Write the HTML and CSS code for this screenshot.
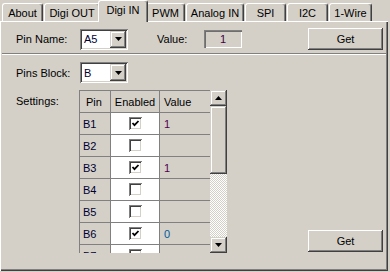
FILE: index.html
```html
<!DOCTYPE html>
<html lang="en">
<head>
  <meta charset="UTF-8">
  <title>Digi IN</title>
  <link rel="stylesheet" href="styles.css">
</head>
<body>
  <div class="window">
    <div class="tabs">
      <div class="tab w-about">About</div>
      <div class="tab w-out">Digi OUT</div>
      <div class="tab selected">Digi IN</div>
      <div class="tab w-pwm">PWM</div>
      <div class="tab w-analog">Analog IN</div>
      <div class="tab w-spi">SPI</div>
      <div class="tab w-i2c">I2C</div>
      <div class="tab w-wire">1-Wire</div>
    </div>

    <div class="panel">
      <div class="row row-pin">
        <span class="label">Pin Name:</span>
        <div class="combo">
          <span class="combo-text">A5</span>
          <span class="combo-btn"><svg width="7" height="4" viewBox="0 0 7 4"><polygon points="0,0 7,0 3.5,4" fill="#000"/></svg></span>
        </div>
        <span class="label value-label">Value:</span>
        <div class="value-box">1</div>
        <button class="btn">Get</button>
      </div>

      <div class="separator"></div>

      <div class="row row-block">
        <span class="label">Pins Block:</span>
        <div class="combo">
          <span class="combo-text">B</span>
          <span class="combo-btn"><svg width="7" height="4" viewBox="0 0 7 4"><polygon points="0,0 7,0 3.5,4" fill="#000"/></svg></span>
        </div>
      </div>

      <div class="row row-settings">
        <span class="label settings-label">Settings:</span>
        <div class="grid-wrap">
          <div class="grid" id="grid">
            <div class="cell head pin">Pin</div>
            <div class="cell head center">Enabled</div>
            <div class="cell head">Value</div>
          </div>
          <div class="scrollbar">
            <div class="sb-btn"><svg width="7" height="4" viewBox="0 0 7 4"><polygon points="0,4 7,4 3.5,0" fill="#000"/></svg></div>
            <div class="sb-thumb"></div>
            <div class="sb-track"></div>
            <div class="sb-btn"><svg width="7" height="4" viewBox="0 0 7 4"><polygon points="0,0 7,0 3.5,4" fill="#000"/></svg></div>
          </div>
        </div>
        <button class="btn btn-bottom">Get</button>
      </div>
    </div>
  </div>

  <script>
    // pin, enabled, value
    const pins = [
      ['B1', true, '1'],
      ['B2', false, ''],
      ['B3', true, '1'],
      ['B4', false, ''],
      ['B5', false, ''],
      ['B6', true, '0'],
      ['B7', false, '']
    ];

    const grid = document.getElementById('grid');
    pins.forEach(([name, on, val]) => {
      const pin = document.createElement('div');
      pin.className = 'cell pin-name';
      pin.textContent = name;
      grid.appendChild(pin);

      const en = document.createElement('div');
      en.className = 'cell enabled';
      const box = document.createElement('span');
      box.className = 'checkbox';
      if (on) {
        box.innerHTML = '<svg width="9" height="9" viewBox="0 0 9 9"><polyline points="1.5,4 3.5,6.2 7.5,2" fill="none" stroke="#000" stroke-width="1.8"/></svg>';
      }
      en.appendChild(box);
      grid.appendChild(en);

      const v = document.createElement('div');
      v.className = 'cell val ' + (val === '0' ? 'zero' : 'one');
      v.textContent = val;
      grid.appendChild(v);
    });
  </script>
</body>
</html>
```

FILE: styles.css
```css
body {
  margin: 0;
  background: #d4d0c8;
  font-family: 'Liberation Sans', Arial, sans-serif;
  font-size: 11px;
  color: #000;
}

.window {
  width: 390px;
  height: 272px;
  overflow: hidden;
}

/* tab strip */
.tabs {
  display: flex;
  align-items: flex-end;
  gap: 1px;
  height: 21px;
  padding-left: 2px;
}

.tab {
  box-sizing: border-box;
  height: 18px;
  display: flex;
  align-items: center;
  justify-content: center;
  border-top: 1px solid #fff;
  border-left: 1px solid #fff;
  border-right: 1px solid #404040;
  border-radius: 3px 3px 0 0;
  box-shadow: inset -1px 0 #808080;
  padding-top: 1px;
}

.w-about { width: 41px; }
.w-out { width: 56px; }
.w-pwm { width: 39px; }
.w-analog { width: 58px; }
.w-spi { width: 41px; }
.w-i2c { width: 41px; }
.w-wire { width: 43px; }

.tab.selected {
  width: 50px;
  height: 22px;
  margin: 0 -3px -1px;
  padding: 0 0 4px;
  background: #d4d0c8;
  position: relative;
  z-index: 1;
}

/* page body */
.panel {
  box-sizing: border-box;
  width: 388px;
  height: 250px;
  padding: 7px 5px 0 16px;
  box-shadow: inset 1px 1px #fff, inset -1px -1px #404040, inset -2px -2px #808080;
}

.row {
  display: flex;
  align-items: center;
}

.row-pin {
  height: 22px;
}

.label {
  width: 64px;
  flex-shrink: 0;
}

.value-label {
  width: 47px;
  margin-left: 29px;
}

.separator {
  height: 1px;
  margin: 3px -3px 0 -14px;
  background: #808080;
  border-bottom: 1px solid #fff;
}

.row-block {
  margin-top: 7px;
}

.combo {
  box-sizing: border-box;
  width: 48px;
  height: 21px;
  display: flex;
  align-items: center;
  justify-content: space-between;
  padding: 2px;
  background: #fff;
  box-shadow: inset 1px 1px #808080, inset -1px -1px #fff, inset 2px 2px #404040, inset -2px -2px #d4d0c8;
}

.combo-text {
  padding-left: 2px;
  color: #000033;
}

.combo-btn {
  box-sizing: border-box;
  width: 16px;
  height: 17px;
  display: flex;
  align-items: center;
  justify-content: center;
  background: #d4d0c8;
  box-shadow: inset -1px -1px #404040, inset 1px 1px #d4d0c8, inset -2px -2px #808080, inset 2px 2px #fff;
}

.value-box {
  box-sizing: border-box;
  width: 38px;
  height: 18px;
  display: flex;
  align-items: center;
  justify-content: center;
  color: #400040;
  box-shadow: inset 1px 1px #808080, inset 2px 2px #6e6e6e, inset -1px -1px #fff;
}

.btn {
  box-sizing: border-box;
  width: 75px;
  height: 22px;
  margin-left: auto;
  padding: 0;
  border: none;
  background: #d4d0c8;
  font-family: inherit;
  font-size: 11px;
  color: #000;
  box-shadow: inset -1px -1px #404040, inset 1px 1px #fff, inset -2px -2px #808080, inset 2px 2px #d4d0c8;
}

/* settings grid */
.row-settings {
  align-items: flex-start;
  margin-top: 7px;
}

.settings-label {
  line-height: 22px;
  width: 63px;
}

.grid-wrap {
  display: flex;
  height: 163px;
}

.grid {
  display: grid;
  grid-template-columns: 30px 48px 50px;
  grid-auto-rows: 21px;
  gap: 1px;
  padding: 1px 0 0 1px;
  background: #808080;
  height: 162px;
  overflow: hidden;
  align-content: start;
}

.cell {
  background: #d4d0c8;
  display: flex;
  align-items: center;
  padding-left: 4px;
  color: #000;
}

.cell.head.pin {
  padding-left: 6px;
}

.cell.center {
  justify-content: center;
  padding-left: 0;
}

.pin-name {
  padding-left: 3px;
  color: #000030;
}

.enabled {
  background: #fff;
  justify-content: center;
  padding-left: 0;
}

.val.one { color: #500050; }
.val.zero { color: #005a9c; }

.checkbox {
  box-sizing: border-box;
  width: 13px;
  height: 13px;
  padding: 2px;
  background: #fff;
  box-shadow: inset 1px 1px #808080, inset -1px -1px #fff, inset 2px 2px #404040, inset -2px -2px #d4d0c8;
}

.checkbox svg {
  display: block;
}

.scrollbar {
  width: 17px;
  display: flex;
  flex-direction: column;
}

.sb-btn {
  height: 16px;
  display: flex;
  align-items: center;
  justify-content: center;
  box-shadow: inset -1px -1px #404040, inset 1px 1px #d4d0c8, inset -2px -2px #808080, inset 2px 2px #fff;
}

.sb-thumb {
  height: 68px;
  box-shadow: inset -1px -1px #404040, inset 1px 1px #d4d0c8, inset -2px -2px #808080, inset 2px 2px #fff;
}

.sb-track {
  flex: 1;
  background: repeating-conic-gradient(#fff 0 25%, #d4d0c8 0 50%) 0 0 / 2px 2px;
}

.btn-bottom {
  align-self: flex-end;
  margin-bottom: 1px;
}
```
